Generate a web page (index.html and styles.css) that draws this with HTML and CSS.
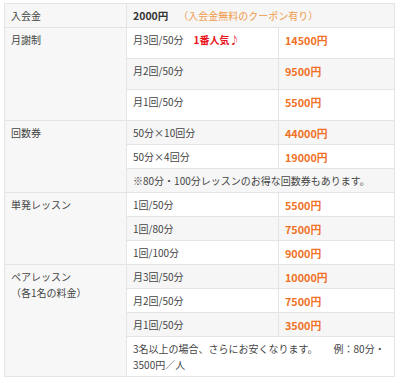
FILE: index.html
```html
<!DOCTYPE html>
<html lang="ja">
<head>
<meta charset="utf-8">
<link rel="stylesheet" href="styles.css">
</head>
<body>
<table class="price">
  <colgroup>
    <col class="c1"><col class="c2"><col class="c3">
  </colgroup>
  <tr>
    <th>入会金</th>
    <td colspan="2"><b class="fee">2000円</b><span class="note">（入会金無料のクーポン有り）</span></td>
  </tr>
  <tr class="tall">
    <th rowspan="3">月謝制</th>
    <td>月3回/50分<span class="hot">1番人気♪</span></td>
    <td class="yen">14500円</td>
  </tr>
  <tr class="tall">
    <td>月2回/50分</td>
    <td class="yen">9500円</td>
  </tr>
  <tr class="tall">
    <td>月1回/50分</td>
    <td class="yen">5500円</td>
  </tr>
  <tr>
    <th rowspan="3">回数券</th>
    <td>50分×10回分</td>
    <td class="yen">44000円</td>
  </tr>
  <tr>
    <td>50分×4回分</td>
    <td class="yen">19000円</td>
  </tr>
  <tr>
    <td colspan="2">※80分・100分レッスンのお得な回数券もあります。</td>
  </tr>
  <tr>
    <th rowspan="3">単発レッスン</th>
    <td>1回/50分</td>
    <td class="yen">5500円</td>
  </tr>
  <tr>
    <td>1回/80分</td>
    <td class="yen">7500円</td>
  </tr>
  <tr>
    <td>1回/100分</td>
    <td class="yen">9000円</td>
  </tr>
  <tr>
    <th rowspan="4">ペアレッスン<br>（各1名の料金）</th>
    <td>月3回/50分</td>
    <td class="yen">10000円</td>
  </tr>
  <tr>
    <td>月2回/50分</td>
    <td class="yen">7500円</td>
  </tr>
  <tr>
    <td>月1回/50分</td>
    <td class="yen">3500円</td>
  </tr>
  <tr>
    <td colspan="2">3名以上の場合、さらにお安くなります。<span class="ex">例：80分・</span><br>3500円／人</td>
  </tr>
</table>
</body>
</html>
```
FILE: styles.css
```css
html, body {
  margin: 0;
  padding: 0;
  background: #ffffff;
}
body {
  font-family: "Noto Sans CJK JP", "Noto Sans", sans-serif;
  font-size: 10px;
  color: #444444;
}
.price {
  margin: 3px 0 0 4px;
  width: 390px;
  border-collapse: collapse;
  table-layout: fixed;
  border: 1px solid #e2e2e2;
}
.c1 { width: 122px; }
.c2 { width: 152px; }
.c3 { width: 116px; }
.price th,
.price td {
  border: 1px solid #e4e4e4;
  padding: 4px 6px 3px 6px;
  line-height: 16px;
  text-align: left;
  vertical-align: top;
  font-weight: normal;
}
.price tr:nth-child(odd) td {
  background: #f6f6f6;
}
.price th {
  background: #f7f7f7;
}
.price tr.tall td {
  padding-bottom: 10px;
}
.fee {
  color: #333333;
  font-weight: bold;
  font-size: 10.5px;
}
.note {
  color: #f09a4a;
  margin-left: 10px;
}
.hot {
  color: #e8141c;
  font-weight: bold;
  margin-left: 10px;
}
.ex {
  margin-left: 16px;
}
.price td.yen {
  color: #f07124;
  font-weight: bold;
  font-size: 10.8px;
}
```
